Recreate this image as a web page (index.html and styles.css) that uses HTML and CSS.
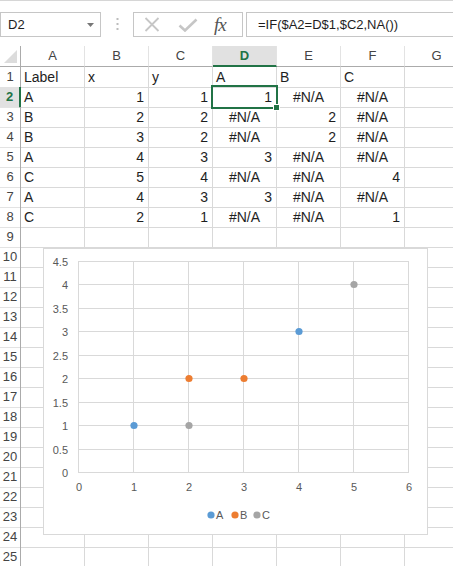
FILE: index.html
```html
<!DOCTYPE html>
<html lang="en">
<head>
  <meta charset="UTF-8" />
  <title>Scatter by label</title>
  <link rel="stylesheet" href="styles.css">
</head>
<body>
  <div class="toolbar">
    <div class="namebox">
      <span>D2</span>
      <svg class="caret" width="7" height="4" viewBox="0 0 7 4"><path d="M0 0h7L3.5 4z" fill="#777"/></svg>
    </div>
    <svg class="grip" width="3" height="14" viewBox="0 0 3 14">
      <rect x="0.5" y="0" width="2" height="2" fill="#bdbdbd"/>
      <rect x="0.5" y="5" width="2" height="2" fill="#bdbdbd"/>
      <rect x="0.5" y="10" width="2" height="2" fill="#bdbdbd"/>
    </svg>
    <div class="fx-buttons">
      <svg width="16" height="15" viewBox="0 0 16 15"><path d="M1.5 1L14.5 14M14.5 1L1.5 14" stroke="#c6c6c6" stroke-width="1.8" fill="none"/></svg>
      <svg width="20" height="14" viewBox="0 0 20 14"><path d="M1.5 7.5L7 12.5L18.5 1.5" stroke="#c6c6c6" stroke-width="2.6" fill="none"/></svg>
      <span class="fx">fx</span>
    </div>
    <div class="formula">=IF($A2=D$1,$C2,NA())</div>
  </div>

  <div class="sheet">
    <div class="row head">
      <div class="corner"><svg width="13" height="13" viewBox="0 0 13 13"><path d="M13 0V13H0z" fill="#dcdcdc"/></svg></div>
      <div class="colhead">A</div><div class="colhead">B</div><div class="colhead">C</div>
      <div class="colhead active">D</div><div class="colhead">E</div><div class="colhead">F</div><div class="colhead">G</div>
    </div>
    <div class="row">
      <div class="rowhead">1</div>
      <div class="cell">Label</div><div class="cell">x</div><div class="cell">y</div>
      <div class="cell">A</div><div class="cell">B</div><div class="cell">C</div><div class="cell"></div>
    </div>
    <div class="row">
      <div class="rowhead active">2</div>
      <div class="cell">A</div><div class="cell num">1</div><div class="cell num">1</div>
      <div class="cell num selected">1</div><div class="cell err">#N/A</div><div class="cell err">#N/A</div><div class="cell"></div>
    </div>
    <div class="row">
      <div class="rowhead">3</div>
      <div class="cell">B</div><div class="cell num">2</div><div class="cell num">2</div>
      <div class="cell err">#N/A</div><div class="cell num">2</div><div class="cell err">#N/A</div><div class="cell"></div>
    </div>
    <div class="row">
      <div class="rowhead">4</div>
      <div class="cell">B</div><div class="cell num">3</div><div class="cell num">2</div>
      <div class="cell err">#N/A</div><div class="cell num">2</div><div class="cell err">#N/A</div><div class="cell"></div>
    </div>
    <div class="row">
      <div class="rowhead">5</div>
      <div class="cell">A</div><div class="cell num">4</div><div class="cell num">3</div>
      <div class="cell num">3</div><div class="cell err">#N/A</div><div class="cell err">#N/A</div><div class="cell"></div>
    </div>
    <div class="row">
      <div class="rowhead">6</div>
      <div class="cell">C</div><div class="cell num">5</div><div class="cell num">4</div>
      <div class="cell err">#N/A</div><div class="cell err">#N/A</div><div class="cell num">4</div><div class="cell"></div>
    </div>
    <div class="row">
      <div class="rowhead">7</div>
      <div class="cell">A</div><div class="cell num">4</div><div class="cell num">3</div>
      <div class="cell num">3</div><div class="cell err">#N/A</div><div class="cell err">#N/A</div><div class="cell"></div>
    </div>
    <div class="row">
      <div class="rowhead">8</div>
      <div class="cell">C</div><div class="cell num">2</div><div class="cell num">1</div>
      <div class="cell err">#N/A</div><div class="cell err">#N/A</div><div class="cell num">1</div><div class="cell"></div>
    </div>
    <div id="blank-rows"></div>

    <div class="chart">
      <svg width="383" height="285" viewBox="0 0 383 285" shape-rendering="crispEdges">
        <g stroke="#d9d9d9" stroke-width="1">
          <line x1="34" y1="12.5" x2="364" y2="12.5"/>
          <line x1="34" y1="35.5" x2="364" y2="35.5"/>
          <line x1="34" y1="59.5" x2="364" y2="59.5"/>
          <line x1="34" y1="82.5" x2="364" y2="82.5"/>
          <line x1="34" y1="106.5" x2="364" y2="106.5"/>
          <line x1="34" y1="129.5" x2="364" y2="129.5"/>
          <line x1="34" y1="153.5" x2="364" y2="153.5"/>
          <line x1="34" y1="176.5" x2="364" y2="176.5"/>
          <line x1="34" y1="200.5" x2="364" y2="200.5"/>
          <line x1="34" y1="223.5" x2="364" y2="223.5"/>
          <line x1="34.5" y1="12" x2="34.5" y2="224"/>
          <line x1="89.5" y1="12" x2="89.5" y2="224"/>
          <line x1="144.5" y1="12" x2="144.5" y2="224"/>
          <line x1="199.5" y1="12" x2="199.5" y2="224"/>
          <line x1="254.5" y1="12" x2="254.5" y2="224"/>
          <line x1="309.5" y1="12" x2="309.5" y2="224"/>
          <line x1="364.5" y1="12" x2="364.5" y2="224"/>
        </g>
        <g class="axis" text-anchor="end">
          <text x="24" y="17">4.5</text>
          <text x="24" y="40">4</text>
          <text x="24" y="64">3.5</text>
          <text x="24" y="87">3</text>
          <text x="24" y="111">2.5</text>
          <text x="24" y="134">2</text>
          <text x="24" y="158">1.5</text>
          <text x="24" y="181">1</text>
          <text x="24" y="205">0.5</text>
          <text x="24" y="228">0</text>
        </g>
        <g class="axis" text-anchor="middle">
          <text x="35" y="242">0</text>
          <text x="90" y="242">1</text>
          <text x="145" y="242">2</text>
          <text x="200" y="242">3</text>
          <text x="255" y="242">4</text>
          <text x="310" y="242">5</text>
          <text x="365" y="242">6</text>
        </g>
        <g shape-rendering="auto">
          <circle cx="90" cy="176.5" r="3.6" fill="#5b9bd5"/>
          <circle cx="255" cy="82.5" r="3.6" fill="#5b9bd5"/>
          <circle cx="145" cy="129.5" r="3.6" fill="#ed7d31"/>
          <circle cx="200" cy="129.5" r="3.6" fill="#ed7d31"/>
          <circle cx="310" cy="35.5" r="3.6" fill="#a5a5a5"/>
          <circle cx="145" cy="176.5" r="3.6" fill="#a5a5a5"/>

          <circle cx="167" cy="266" r="3.6" fill="#5b9bd5"/>
          <circle cx="191" cy="266" r="3.6" fill="#ed7d31"/>
          <circle cx="213" cy="266" r="3.6" fill="#a5a5a5"/>
        </g>
        <g class="axis">
          <text x="172" y="270">A</text>
          <text x="196" y="270">B</text>
          <text x="218" y="270">C</text>
        </g>
      </svg>
    </div>
  </div>

  <script>
    // rows 9..25 are empty, build them instead of typing them out
    const blank = document.getElementById("blank-rows");
    for (let n = 9; n <= 25; n++) {
      const row = document.createElement("div");
      row.className = "row";
      row.innerHTML = `<div class="rowhead">${n}</div>` + '<div class="cell"></div>'.repeat(7);
      blank.appendChild(row);
    }
  </script>
</body>
</html>
```

FILE: styles.css
```css
:root {
  --grid: #d9d9d9;
  --head-line: #ababab;
  --green: #217346;
  --head-active: #e1e1e1;
  --box-line: #c6c6c6;
}

html, body {
  margin: 0;
  overflow: hidden;
  background: #fff;
}

body {
  font-family: 'Liberation Sans', Arial, sans-serif;
  color: #1e1e1e;
  width: 453px;
  height: 566px;
}

/* formula bar */
.toolbar {
  height: 46px;
  box-sizing: border-box;
  border-top: 1px solid #d6d6d6;
  padding-top: 11px;
  display: flex;
  align-items: flex-start;
  white-space: nowrap;
}

.namebox {
  width: 101px;
  height: 25px;
  box-sizing: border-box;
  border: 1px solid var(--box-line);
  display: flex;
  align-items: center;
  justify-content: space-between;
  padding: 0 6px 0 7px;
  font-size: 13px;
}

.grip {
  margin: 6px 14px 0 15px;
}

.fx-buttons {
  width: 110px;
  height: 25px;
  box-sizing: border-box;
  border: 1px solid var(--box-line);
  display: flex;
  align-items: center;
  padding-left: 10px;
  gap: 18px;
}

.fx {
  font-family: 'Liberation Serif', 'DejaVu Serif', serif;
  font-style: italic;
  font-size: 19px;
  color: #555;
  margin-left: -2px;
  letter-spacing: -1px;
}

.formula {
  flex: 1;
  height: 25px;
  box-sizing: border-box;
  margin-left: 3px;
  border: 1px solid var(--box-line);
  border-right: none;
  padding-left: 11px;
  font-size: 13px;
  line-height: 23px;
}

/* sheet */
.sheet {
  position: relative;
}

.row {
  display: grid;
  grid-template-columns: 21px repeat(7, 64px);
  height: 20px;
}

.row.head {
  height: 21px;
}

.row > div {
  box-sizing: border-box;
  border-right: 1px solid var(--grid);
  border-bottom: 1px solid var(--grid);
}

.corner {
  display: flex;
  align-items: flex-end;
  justify-content: flex-end;
  padding: 0 3px 3px 0;
  border-right-color: var(--head-line) !important;
  border-bottom-color: var(--head-line) !important;
}

.colhead {
  text-align: center;
  font-size: 13px;
  line-height: 20px;
  color: #444;
  border-right-color: #e3e3e3 !important;
  border-bottom-color: var(--head-line) !important;
}

.colhead.active {
  background: var(--head-active);
  color: var(--green);
  font-weight: bold;
  border-bottom: 2px solid var(--green) !important;
  line-height: 19px;
}

.rowhead {
  text-align: center;
  font-size: 13px;
  line-height: 20px;
  color: #444;
  border-right-color: var(--head-line) !important;
  border-bottom-color: #e3e3e3 !important;
}

.rowhead.active {
  background: var(--head-active);
  color: var(--green);
  font-weight: bold;
  border-right: 2px solid var(--green) !important;
}

.cell {
  font-size: 14px;
  line-height: 19px;
  padding: 1px 3px 0;
  overflow: hidden;
}

.cell.num {
  text-align: right;
  padding-right: 4px;
}

.cell.err {
  text-align: center;
}

.cell.selected {
  position: relative;
  overflow: visible;
}

.cell.selected::after {
  content: "";
  position: absolute;
  left: -2px;
  top: -2px;
  right: -2px;
  bottom: -2px;
  border: 2px solid var(--green);
}

.cell.selected::before {
  content: "";
  position: absolute;
  right: -4px;
  bottom: -4px;
  width: 5px;
  height: 5px;
  background: var(--green);
  border: 1px solid #fff;
  z-index: 1;
}

/* chart floats over the grid */
.chart {
  position: absolute;
  left: 43px;
  top: 202px;
  width: 385px;
  height: 287px;
  box-sizing: border-box;
  background: #fff;
  border: 1px solid #d9d9d9;
}

.chart svg {
  display: block;
}

.axis text {
  font-family: 'Liberation Sans', Arial, sans-serif;
  font-size: 11px;
  fill: #595959;
}
```
